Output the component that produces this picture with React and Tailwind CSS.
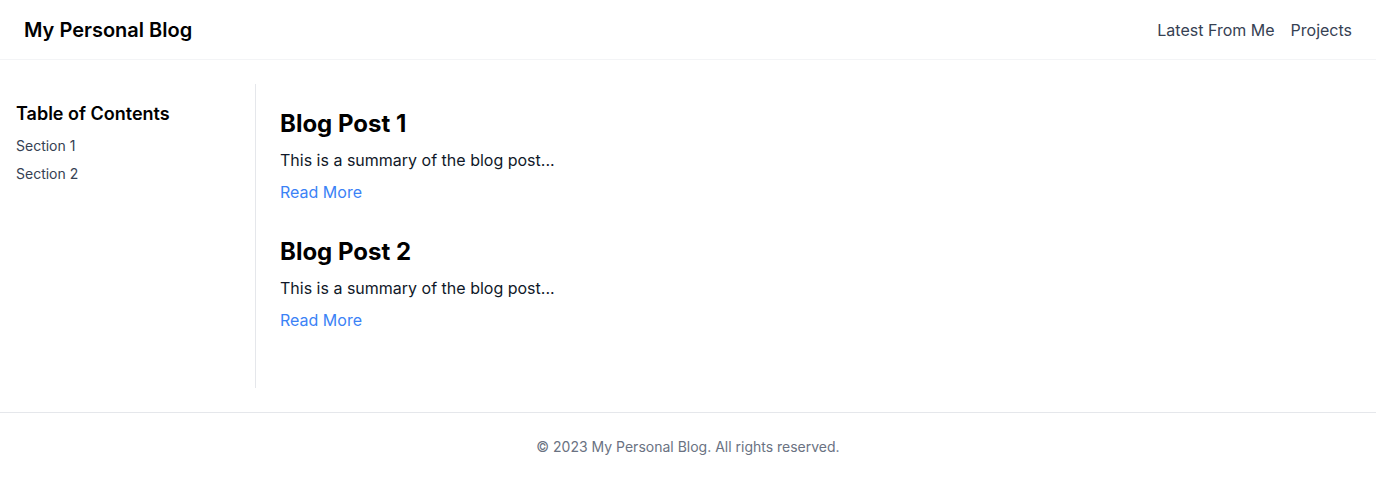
import React from 'react';

const posts = [
  { title: 'Blog Post 1', summary: 'This is a summary of the blog post...' },
  { title: 'Blog Post 2', summary: 'This is a summary of the blog post...' },
];

const App = () => {
  return (
    <div className="min-h-screen bg-white text-black font-['Inter',sans-serif]">
      <header className="flex h-[60px] items-center justify-between px-6 border-b border-gray-100">
        <h1 className="text-xl font-semibold">My Personal Blog</h1>
        <nav className="flex gap-4 text-gray-700">
          <a href="#">Latest From Me</a>
          <a href="#">Projects</a>
        </nav>
      </header>

      <main className="flex py-6">
        <aside className="w-64 shrink-0 p-4 border-r border-gray-200">
          <h2 className="text-lg font-semibold mb-2">Table of Contents</h2>
          <ul className="space-y-2 text-sm text-gray-700">
            <li><a href="#">Section 1</a></li>
            <li><a href="#">Section 2</a></li>
          </ul>
        </aside>
        <section className="flex-1 p-6">
          {posts.map((post) => (
            <article key={post.title} className="mb-8">
              <h2 className="text-2xl font-bold mb-2">{post.title}</h2>
              <p className="mb-2 text-gray-900">{post.summary}</p>
              <a href="#" className="text-[#3b82f6]">Read More</a>
            </article>
          ))}
        </section>
      </main>

      <footer className="border-t border-gray-200 py-6 text-center text-sm text-gray-500">
        © 2023 My Personal Blog. All rights reserved.
      </footer>
    </div>
  );
};

export default App;
